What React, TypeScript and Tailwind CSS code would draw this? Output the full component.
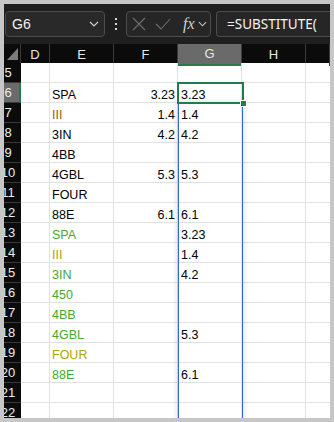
import React from "react";

type Row = {
    n: number;
    e?: string;
    eColor?: string;
    f?: string;
    g?: string;
};

const GREEN = "text-[#47a62e]";
const OLIVE = "text-[#b3a300]";

const rows: Row[] = [
    { n: 5 },
    { n: 6, e: "SPA", f: "3.23", g: "3.23" },
    { n: 7, e: "III", eColor: "text-[#9c5700]", f: "1.4", g: "1.4" },
    { n: 8, e: "3IN", f: "4.2", g: "4.2" },
    { n: 9, e: "4BB" },
    { n: 10, e: "4GBL", f: "5.3", g: "5.3" },
    { n: 11, e: "FOUR" },
    { n: 12, e: "88E", f: "6.1", g: "6.1" },
    { n: 13, e: "SPA", eColor: GREEN, g: "3.23" },
    { n: 14, e: "III", eColor: OLIVE, g: "1.4" },
    { n: 15, e: "3IN", eColor: GREEN, g: "4.2" },
    { n: 16, e: "450", eColor: GREEN },
    { n: 17, e: "4BB", eColor: GREEN },
    { n: 18, e: "4GBL", eColor: GREEN, g: "5.3" },
    { n: 19, e: "FOUR", eColor: OLIVE },
    { n: 20, e: "88E", eColor: GREEN, g: "6.1" },
    { n: 21 },
    { n: 22 },
];

const cols = "grid grid-cols-[17px_29px_64px_64px_64px_64px_24px]";

const Chevron = ({ className }: { className?: string }) => (
    <svg viewBox="0 0 10 6" className={className} fill="none">
        <path d="M1 1l4 4 4-4" stroke="currentColor" strokeWidth="1.2" />
    </svg>
);

export default function App() {
    return (
        <div className="w-[334px] h-[422px] bg-[#c7c7c7] p-[4px] overflow-hidden font-['Liberation_Sans',Arial,sans-serif]">
            <div className="w-[326px] h-[414px] overflow-hidden bg-white">
                {/* formula bar */}
                <div className="h-[40px] bg-[#1f1f1f] flex items-center">
                    <div className="ml-[1px] w-[100px] h-[26px] shrink-0 rounded-[4px] border border-[#4d4d4d] bg-[#292929] flex items-center pl-[6px] pr-[5px] text-[14px] text-[#f2f2f2]">
                        <span className="flex-1 pt-[1px]">G6</span>
                        <Chevron className="w-[10px] h-[6px] text-[#d0d0d0]" />
                    </div>
                    <div className="w-[21px] shrink-0 flex flex-col items-center gap-[3px]">
                        <span className="w-[2px] h-[2px] bg-[#d8d8d8]" />
                        <span className="w-[2px] h-[2px] bg-[#d8d8d8]" />
                        <span className="w-[2px] h-[2px] bg-[#d8d8d8]" />
                    </div>
                    <div className="w-[85px] h-[26px] shrink-0 rounded-[4px] border border-[#4d4d4d] bg-[#262626] flex items-center pl-[5px]">
                        <svg viewBox="0 0 14 14" className="w-[14px] h-[14px] text-[#6e6e6e]" fill="none">
                            <path d="M1 1l12 12M13 1L1 13" stroke="currentColor" strokeWidth="1.1" />
                        </svg>
                        <svg viewBox="0 0 16 12" className="ml-[9px] w-[16px] h-[12px] text-[#6e6e6e]" fill="none">
                            <path d="M1 6l5 5L15 1" stroke="currentColor" strokeWidth="1.1" />
                        </svg>
                        <span className="ml-[12px] font-['Liberation_Serif',serif] italic text-[16px] text-[#cfcfcf] leading-none">
                            fx
                        </span>
                        <Chevron className="ml-[3px] w-[9px] h-[6px] text-[#c8c8c8]" />
                    </div>
                    <div className="ml-[5px] w-[130px] h-[26px] shrink-0 rounded-l-[4px] border border-r-0 border-[#4d4d4d] bg-[#262626] flex items-center pl-[10px] text-[13.5px] text-[#f4f4f4] font-['Noto_Sans',sans-serif]">
                        =SUBSTITUTE(
                    </div>
                </div>

                {/* column headers */}
                <div className={`${cols} h-[19px] bg-[#0b0b0b] text-[13px] text-[#e8e8e8]`}>
                    <div className="relative border-r border-[#3a3a3a]">
                        <svg viewBox="0 0 17 19" className="absolute inset-0 w-[17px] h-[19px]">
                            <polygon points="14,4 14,16 3,16" fill="#7c7c7c" />
                        </svg>
                    </div>
                    {["D", "E", "F", "G", "H", ""].map((c) => (
                        <div
                            key={c || "I"}
                            className={`flex items-center justify-center border-r border-[#3a3a3a] ${
                                c === "G" ? "bg-[#6a6a6a] border-b-2 border-b-[#237b4b]" : ""
                            }`}
                        >
                            {c}
                        </div>
                    ))}
                </div>

                {/* sheet body */}
                <div className="relative">
                    {rows.map((r) => (
                        <div key={r.n} className={`${cols} h-[20px] text-[12.5px] text-black`}>
                            <div
                                className={`overflow-hidden border-b border-[#3a3a3a] ${
                                    r.n === 6
                                        ? "bg-[#6b6b6b] border-r-2 border-r-[#237b4b]"
                                        : "bg-[#0b0b0b]"
                                }`}
                            >
                                <div className="ml-[-9px] w-[26px] text-center text-[13px] leading-[20px] text-[#ececec]">
                                    {r.n}
                                </div>
                            </div>
                            <div className="border-r border-b border-[#e1e1e1]" />
                            <div
                                className={`border-r border-b border-[#e1e1e1] pl-[2px] pt-[5px] leading-[14px] whitespace-nowrap ${
                                    r.eColor ?? ""
                                }`}
                            >
                                {r.e}
                            </div>
                            <div className="border-r border-b border-[#e1e1e1] pr-[2px] pt-[5px] leading-[14px] text-right">
                                {r.f}
                            </div>
                            <div className="border-r border-b border-[#e1e1e1] pl-[3px] pt-[5px] leading-[14px]">
                                {r.g}
                            </div>
                            <div className="border-r border-b border-[#e1e1e1]" />
                            <div className="border-b border-[#e1e1e1]" />
                        </div>
                    ))}

                    {/* copied range outline */}
                    <div className="absolute left-[174px] top-[40px] w-[65px] bottom-0 border-x border-[#2f6bd0] shadow-[0_0_6px_rgba(0,0,0,0.18)]" />

                    {/* active cell */}
                    <div className="absolute left-[173px] top-[19px] w-[67px] h-[22px] border-2 border-[#237b4b]" />
                    <div className="absolute left-[236px] top-[37px] w-[7px] h-[7px] bg-[#237b4b] border border-white" />
                </div>
            </div>
        </div>
    );
}
